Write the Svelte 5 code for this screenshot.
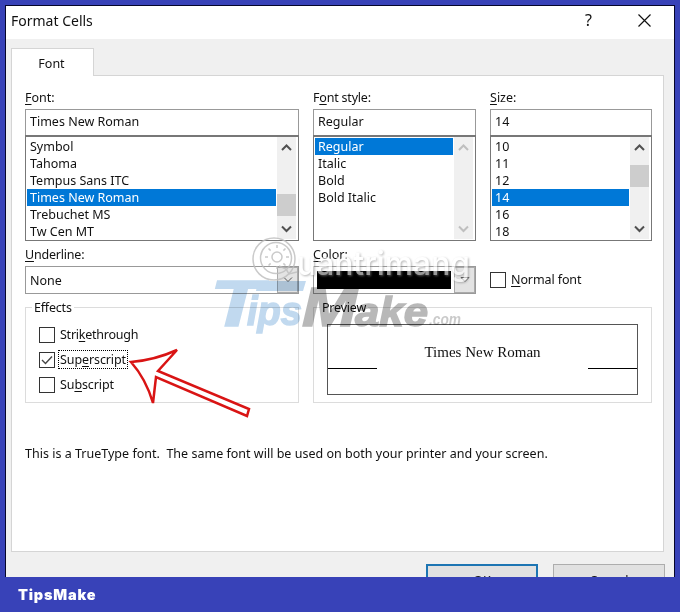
<script>
  let fontName = $state('Times New Roman');
  let fontStyle = $state('Regular');
  let fontSize = $state('14');
  let effects = $state([
    { pre: 'Stri', key: 'k', post: 'ethrough', checked: false },
    { pre: 'Sup', key: 'e', post: 'rscript', checked: true },
    { pre: 'Su', key: 'b', post: 'script', checked: false }
  ]);
  const fonts = ['Symbol', 'Tahoma', 'Tempus Sans ITC', 'Times New Roman', 'Trebuchet MS', 'Tw Cen MT'];
  const styles = ['Regular', 'Italic', 'Bold', 'Bold Italic'];
  const sizes = ['10', '11', '12', '14', '16', '18'];
  const rays = [0, 45, 90, 135, 180, 225, 270, 315];
</script>

{#snippet list(items, current, pick, thumb)}
  <div class="list">
    <div class="options">
      {#each items as item}
        <button type="button" class="option" class:selected={item === current} onclick={() => pick(item)}>{item}</button>
      {/each}
    </div>
    <div class="scroll {thumb}">
      <svg width="19" height="20" viewBox="0 0 19 20"><path d="M5 13l4.500-4.500 4.500 4.500" /></svg>
      <div class="track"><div class="thumb"></div></div>
      <svg width="19" height="20" viewBox="0 0 19 20"><path d="M5 7.500l4.500 4.500 4.500-4.500" /></svg>
    </div>
  </div>
{/snippet}

<div class="page">
  <div class="dialog">
    <header>
      <span class="title">Format Cells</span>
      <span class="help">?</span>
      <svg class="close" width="13" height="13" viewBox="0 0 13 13"><path d="M.5.5l12 12M12.500.5l-12 12" /></svg>
    </header>
    <div class="tabs"><div class="tab">Font</div></div>
    <main>
      <div class="columns">
        <section>
          <div class="label"><u>F</u>ont:</div>
          <div class="field">{fontName}</div>
          {@render list(fonts, fontName, (v) => (fontName = v), 'low')}
        </section>
        <section>
          <div class="label tight">F<u>o</u>nt style:</div>
          <div class="field">{fontStyle}</div>
          {@render list(styles, fontStyle, (v) => (fontStyle = v), 'disabled')}
        </section>
        <section>
          <div class="label"><u>S</u>ize:</div>
          <div class="field">{fontSize}</div>
          {@render list(sizes, fontSize, (v) => (fontSize = v), 'high')}
        </section>
      </div>
      <div class="columns second">
        <section>
          <div class="label tight"><u>U</u>nderline:</div>
          <div class="combo">
            <span class="none">None</span>
            <span class="drop"><svg width="10" height="6" viewBox="0 0 10 6"><path d="M1 .5l4 4 4-4" /></svg></span>
          </div>
        </section>
        <section>
          <div class="label"><u>C</u>olor:</div>
          <div class="combo">
            <span class="swatch"></span>
            <span class="drop"><svg width="10" height="6" viewBox="0 0 10 6"><path d="M1 .5l4 4 4-4z" /></svg></span>
          </div>
        </section>
        <div class="check normal"><span class="box"></span><span class="text"><u>N</u>ormal font</span></div>
      </div>
      <div class="groups">
        <div class="group">
          <div class="legend">Effects</div>
          <div class="effects">
            {#each effects as e}
              <button type="button" class="check" onclick={() => (e.checked = !e.checked)}>
                <span class="box">
                  {#if e.checked}
                    <svg width="14" height="14" viewBox="0 0 14 14"><path d="M2 7l3.500 3.500L12 3.500" /></svg>
                  {/if}
                </span>
                <span class="text" class:focused={e.checked}>{e.pre}<u>{e.key}</u>{e.post}</span>
              </button>
            {/each}
          </div>
        </div>
        <div class="group">
          <div class="legend">Preview</div>
          <div class="preview">
            <span class="rule"></span>
            <span class="sample">{fontName}</span>
            <span class="rule"></span>
          </div>
        </div>
      </div>
      <p class="note">This is a TrueType font.&nbsp; The same font will be used on both your printer and your screen.</p>
    </main>
    <div class="actions">
      <button type="button" class="ok">OK</button>
      <button type="button">Cancel</button>
    </div>
  </div>
  <footer>TipsMake</footer>

  <svg class="overlay" width="680" height="612" viewBox="0 0 680 612">
    <g class="tips">
      <text x="210" y="326" font-size="65" textLength="52" lengthAdjust="spacingAndGlyphs">T</text>
      <!-- bar running on over the small letters -->
      <path d="M258 281H306L303 291H256Z" />
      <text x="247" y="325" font-size="41" textLength="55" lengthAdjust="spacingAndGlyphs">ips</text>
    </g>
    <g class="make">
      <text x="302" y="326" font-size="55" textLength="55" lengthAdjust="spacingAndGlyphs">M</text>
      <text x="355" y="326" font-size="41" textLength="73" lengthAdjust="spacingAndGlyphs">ake</text>
      <text class="com" x="429" y="325" font-size="16" textLength="32" lengthAdjust="spacingAndGlyphs">.com</text>
    </g>
    <g class="emblem">
      <circle cx="274" cy="259" r="21" />
      <circle cx="276" cy="258" r="15.500" />
      <circle cx="277" cy="257" r="5" />
      {#each rays as a}
        <path d="M277 248v-3" transform="rotate({a} 277 257)" />
      {/each}
      <path d="M279 266l7 3 3 5 8-2" />
    </g>
    <text class="brand" x="297" y="275" textLength="173" lengthAdjust="spacingAndGlyphs">uantrimang</text>
    <path class="arrow" d="M131 362Q155 360 177 350L158 371L249 409L247 416L156 377L153 403Q146 379 131 362Z" />
  </svg>
</div>

<style>
  :global(body) {
    margin: 0;
  }
  .page, .page * {
    box-sizing: border-box;
  }
  .page {
    position: relative;
    width: 680px;
    height: 612px;
    padding: 5px;
    overflow: hidden;
    background: #3842b8;
    color: #111;
    font: 12.5px/17px "Noto Sans", sans-serif;
  }
  button {
    padding: 0;
    border: 0;
    background: none;
    color: inherit;
    font: inherit;
    text-align: left;
  }
  svg {
    fill: none;
  }
  u {
    text-underline-offset: 2px;
    text-decoration-thickness: 1px;
  }
  .dialog {
    width: 670px;
    height: 572px;
    border: 1px solid #05052a;
    border-bottom: 0;
    background: #f0f0f0;
    overflow: hidden;
  }
  header {
    display: flex;
    align-items: center;
    height: 33px;
    padding: 0 23px 4px 5px;
    background: #fff;
  }
  .title {
    flex: 1;
    font-size: 14px;
  }
  .help {
    font-size: 16px;
    margin-right: 46px;
  }
  .close path {
    stroke: #111;
    stroke-width: 1.2;
  }
  .tabs {
    height: 36px;
    padding: 9px 0 0 5px;
  }
  .tab {
    position: relative;
    width: 83px;
    height: 28px;
    border: 1px solid #d5d5d5;
    border-bottom: 0;
    background: #fff;
    text-align: center;
    line-height: 30px;
    padding-right: 2px;
  }
  main {
    width: 653px;
    height: 477px;
    margin-left: 5px;
    padding: 13px 11px 0 13px;
    border: 1px solid #d5d5d5;
    background: #fff;
  }
  .columns {
    display: grid;
    grid-template-columns: 274px 163px 162px;
    gap: 14px;
  }
  .label {
    height: 20px;
  }
  .tight {
    letter-spacing: -.2px;
  }
  .field {
    height: 27px;
    padding-left: 4px;
    border: 1px solid #999;
    line-height: 24px;
  }
  .list {
    display: flex;
    justify-content: space-between;
    height: 106px;
    margin-top: -1px;
    padding: 0 2px 1px 1px;
    border: 1px solid #777;
    border-top-width: 2px;
  }
  .options {
    flex: 1;
    margin-right: 1px;
    padding-top: 1px;
  }
  .option {
    display: block;
    width: 100%;
    height: 17px;
    padding-left: 3px;
  }
  .selected {
    background: #0078d7;
    color: #fff;
  }
  .scroll {
    display: flex;
    flex-direction: column;
    width: 19px;
    background: #f0f0f0;
  }
  .scroll path {
    stroke: #505050;
    stroke-width: 2;
  }
  .disabled path {
    stroke: #bfbfbf;
  }
  .track {
    flex: 1;
  }
  .thumb {
    height: 22px;
    background: #cdcdcd;
  }
  .low .thumb {
    margin-top: 37px;
  }
  .high .thumb {
    margin-top: 8px;
  }
  .disabled .thumb {
    display: none;
  }
  .second {
    margin-top: 5px;
  }
  .combo {
    display: flex;
    align-items: center;
    justify-content: space-between;
    height: 28px;
    border: 1px solid #999;
  }
  .none {
    padding-left: 4px;
  }
  .swatch {
    width: 134px;
    height: 18px;
    margin-left: 3px;
    background: #000;
  }
  .drop {
    display: grid;
    place-items: center;
    width: 21px;
    height: 26px;
    border: 1px solid #aaa;
    background: #e3e3e3;
  }
  .drop path {
    stroke: #555;
  }
  .check {
    display: flex;
    align-items: center;
    height: 17px;
  }
  .box {
    display: grid;
    place-items: center;
    width: 16px;
    height: 16px;
    margin-right: 4px;
    border: 1px solid #333;
    background: #fff;
  }
  .box path {
    stroke: #444;
    stroke-width: 1.4;
  }
  .text {
    padding: 0 1px;
    letter-spacing: -.1px;
  }
  .effects .check:first-child .text {
    letter-spacing: -.25px;
  }
  .focused {
    outline: 1px dotted #000;
  }
  .normal {
    margin-top: 25px;
  }
  .groups {
    display: grid;
    grid-template-columns: 274px 339px;
    gap: 14px;
    margin-top: 13px;
  }
  .group {
    height: 96px;
    border: 1px solid #dcdcdc;
  }
  .legend {
    width: max-content;
    height: 17px;
    margin: -9px 0 0 6px;
    padding: 0 2px;
    background: #fff;
    letter-spacing: -.2px;
  }
  .effects {
    display: grid;
    gap: 8px;
    padding: 10px 0 0 13px;
  }
  .preview {
    display: flex;
    align-items: center;
    justify-content: space-between;
    width: 311px;
    height: 71px;
    margin: 8px 0 0 13px;
    border: 1px solid #555;
  }
  .rule {
    width: 49px;
    height: 1px;
    margin-top: 18px;
    background: #000;
  }
  .sample {
    font: 15px/20px "Liberation Serif", serif;
    margin-bottom: 15px;
  }
  .note {
    margin: 42px 0 0;
    white-space: nowrap;
    letter-spacing: .01px;
  }
  .actions {
    display: flex;
    justify-content: flex-end;
    gap: 15px;
    padding: 12px 9px 0 0;
  }
  .actions button {
    width: 112px;
    height: 32px;
    border: 1px solid #adadad;
    background: #e1e1e1;
    text-align: center;
  }
  .actions .ok {
    border: 2px solid #1d75b3;
  }
  footer {
    height: 35px;
    padding-left: 13px;
    color: #fff;
    font: 900 14.5px/35px "Inter", sans-serif;
    letter-spacing: .8px;
  }
  .overlay {
    position: absolute;
    left: 0;
    top: 0;
    pointer-events: none;
    font-family: "Liberation Sans", sans-serif;
    font-weight: bold;
    font-style: italic;
  }
  .tips {
    fill: #5b9bd5;
    opacity: .38;
    mix-blend-mode: multiply;
  }
  .make {
    fill: #555;
    opacity: .42;
    mix-blend-mode: multiply;
  }
  .tips text {
    stroke: #5b9bd5;
    stroke-width: 1.5;
  }
  .make text {
    stroke: #555;
    stroke-width: 1.5;
  }
  .make .com {
    stroke: none;
    opacity: .75;
  }
  .emblem {
    stroke: #bdbdbd;
    stroke-width: 1.5;
    opacity: .8;
  }
  .brand {
    font: 500 33px "Inter", sans-serif;
    fill: #fff;
    opacity: .6;
    filter: drop-shadow(1px 1px 1px #888);
  }
  .arrow {
    fill: #fff;
    stroke: #d91414;
    stroke-width: 2.5;
  }
</style>
